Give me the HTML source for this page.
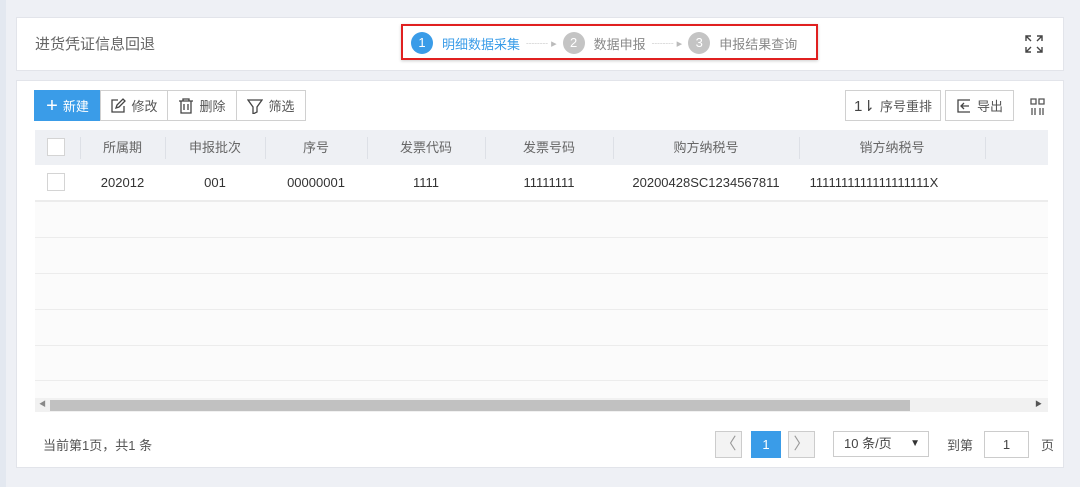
<!DOCTYPE html>
<html><head><meta charset="utf-8"><style>
*{box-sizing:border-box;margin:0;padding:0}
body{width:1080px;height:487px;background:#eef0f5;font-family:"Liberation Sans","Noto Sans CJK SC",sans-serif;position:relative;overflow:hidden;color:#555}
.abs{position:absolute}
.panel{position:absolute;left:16px;width:1048px;background:#fff;border:1px solid #e2e4ea}
.btn{position:absolute;top:90px;height:31px;border:1px solid #d0d0d0;background:#fff;font-size:13px;color:#555;display:flex;align-items:center;justify-content:center;gap:5px}
.th{position:absolute;top:130px;height:35px;line-height:35px;font-size:13px;color:#666;text-align:center}
.sep{position:absolute;top:137px;width:1px;height:22px;background:#dde0e6}
.td{position:absolute;top:165px;height:36px;line-height:36px;font-size:13px;color:#333;text-align:center}
.cb{position:absolute;width:18px;height:18px;border:1px solid #d4d4d4;background:#fff;left:47px}
.circ{display:inline-block;width:22px;height:22px;border-radius:50%;color:#fff;font-size:13px;text-align:center;line-height:22px;vertical-align:middle}
.hl{position:absolute;left:35px;width:1013px;height:1px;background:#ececec}
.arr{color:#bbb;margin:0 6px;vertical-align:middle;font-size:11px;letter-spacing:0}
</style></head><body>
<div class="abs" style="left:0;top:0;width:6px;height:487px;background:#e3e8f0"></div>
<div class="panel" style="top:17px;height:54px"></div>
<div class="abs" style="left:35px;top:33px;font-size:15px;color:#666">进货凭证信息回退</div>
<div class="abs" style="left:401px;top:24px;width:417px;height:36px;border:2px solid #e02020;box-shadow:0 1px 3px rgba(0,0,0,.2)"></div>
<div class="abs" style="left:411px;top:32px;font-size:13px;white-space:nowrap;color:#888">
<span class="circ" style="background:#3a9ce8">1</span><span style="color:#3a9ce8;margin-left:9px;vertical-align:middle">明细数据采集</span><span class="arr">┈┈ ▸</span><span class="circ" style="background:#c4c4c4">2</span><span style="margin-left:9px;vertical-align:middle">数据申报</span><span class="arr">┈┈ ▸</span><span class="circ" style="background:#c4c4c4">3</span><span style="margin-left:9px;vertical-align:middle">申报结果查询</span></div>
<svg class="abs" style="left:1024px;top:34px" width="20" height="20" viewBox="0 0 20 20" fill="none" stroke="#444" stroke-width="1.4"><path d="M2 7V2h5M2 2l5 5M18 7V2h-5M18 2l-5 5M2 13v5h5M2 18l5-5M18 13v5h-5M18 18l-5-5"/></svg>

<div class="panel" style="top:80px;height:388px"></div>
<div class="btn" style="left:34px;width:67px;background:#3a9ce8;border-color:#3a9ce8;color:#fff"><span style="font-size:20px;font-weight:300;line-height:1">+</span>新建</div>
<div class="btn" style="left:100px;width:68px"><svg width="16" height="16" viewBox="0 0 16 16" fill="none" stroke="#444" stroke-width="1.3"><path d="M8 2H2v12h12V8M6 10l1-3 6-6 2 2-6 6z"/></svg>修改</div>
<div class="btn" style="left:167px;width:70px"><svg width="16" height="16" viewBox="0 0 16 16" fill="none" stroke="#444" stroke-width="1.3"><path d="M1 3h14M5 3V1h6v2M3 3v12h10V3M6 6v6M10 6v6"/></svg>删除</div>
<div class="btn" style="left:236px;width:70px"><svg width="16" height="16" viewBox="0 0 16 16" fill="none" stroke="#444" stroke-width="1.3"><path d="M1 2h14l-5 7v5l-4 2V9z"/></svg>筛选</div>
<div class="btn" style="left:845px;width:96px"><span style="font-size:15px;color:#444">1⇂</span>序号重排</div>
<div class="btn" style="left:945px;width:69px"><svg width="16" height="16" viewBox="0 0 16 16" fill="none" stroke="#444" stroke-width="1.3"><path d="M14 2H2v12h12M13 8H6M8 5L5 8l3 3"/></svg>导出</div>
<svg class="abs" style="left:1030px;top:98px" width="15" height="18" viewBox="0 0 15 18" fill="none" stroke="#555" stroke-width="1.3"><path d="M1 1h5v5H1zM9 1h5v5H9zM2 10v7M5 10v7M10 10v7M13 10v7"/></svg>

<div class="abs" style="left:35px;top:130px;width:1013px;height:35px;background:#eef0f4"></div>
<div class="cb" style="top:138px"></div>
<div class="sep" style="left:80px"></div><div class="sep" style="left:165px"></div><div class="sep" style="left:265px"></div><div class="sep" style="left:367px"></div><div class="sep" style="left:485px"></div><div class="sep" style="left:613px"></div><div class="sep" style="left:799px"></div><div class="sep" style="left:985px"></div>
<div class="th" style="left:80px;width:85px">所属期</div>
<div class="th" style="left:165px;width:100px">申报批次</div>
<div class="th" style="left:265px;width:102px">序号</div>
<div class="th" style="left:367px;width:118px">发票代码</div>
<div class="th" style="left:485px;width:128px">发票号码</div>
<div class="th" style="left:613px;width:186px">购方纳税号</div>
<div class="th" style="left:799px;width:186px">销方纳税号</div>
<div class="cb" style="top:173px"></div>
<div class="td" style="left:80px;width:85px">202012</div>
<div class="td" style="left:165px;width:100px">001</div>
<div class="td" style="left:265px;width:102px">00000001</div>
<div class="td" style="left:367px;width:118px">1111</div>
<div class="td" style="left:485px;width:128px">11111111</div>
<div class="td" style="left:613px;width:186px">20200428SC1234567811</div>
<div class="td" style="left:799px;width:150px">1111111111111111111X</div>
<div class="abs" style="left:35px;top:201px;width:1013px;height:197px;background:#fbfbfb"></div>
<div class="hl" style="top:200px;height:2px"></div>
<div class="hl" style="top:237px"></div><div class="hl" style="top:273px"></div><div class="hl" style="top:309px"></div><div class="hl" style="top:345px"></div><div class="hl" style="top:380px"></div>
<div class="abs" style="left:35px;top:398px;width:1013px;height:14px;background:#f1f1f1"></div>
<div class="abs" style="left:50px;top:400px;width:860px;height:11px;background:#c1c1c1"></div>
<div class="abs" style="left:39px;top:398px;font-size:7px;color:#888;line-height:14px">◀</div>
<div class="abs" style="left:1035px;top:398px;font-size:7px;color:#555;line-height:14px">▶</div>

<div class="abs" style="left:43px;top:435px;font-size:13px;color:#555">当前第1页，共1 条</div>
<div class="abs" style="left:715px;top:431px;width:27px;height:27px;border:1px solid #ccc;background:#f3f3f3;text-align:center;line-height:25px;color:#999">〈</div>
<div class="abs" style="left:751px;top:431px;width:30px;height:27px;background:#3a9ce8;color:#fff;text-align:center;line-height:27px;font-size:13px">1</div>
<div class="abs" style="left:788px;top:431px;width:27px;height:27px;border:1px solid #ccc;background:#f3f3f3;text-align:center;line-height:25px;color:#999">〉</div>
<div class="abs" style="left:833px;top:431px;width:96px;height:26px;border:1px solid #ccc;font-size:13px;line-height:24px;padding-left:10px;color:#444">10 条/页<span style="position:absolute;right:8px;font-size:10px;color:#333">▼</span></div>
<div class="abs" style="left:947px;top:435px;font-size:13px;color:#555">到第</div>
<div class="abs" style="left:984px;top:431px;width:45px;height:27px;border:1px solid #ccc;text-align:center;line-height:25px;font-size:13px;color:#444">1</div>
<div class="abs" style="left:1041px;top:435px;font-size:13px;color:#555">页</div>
</body></html>
